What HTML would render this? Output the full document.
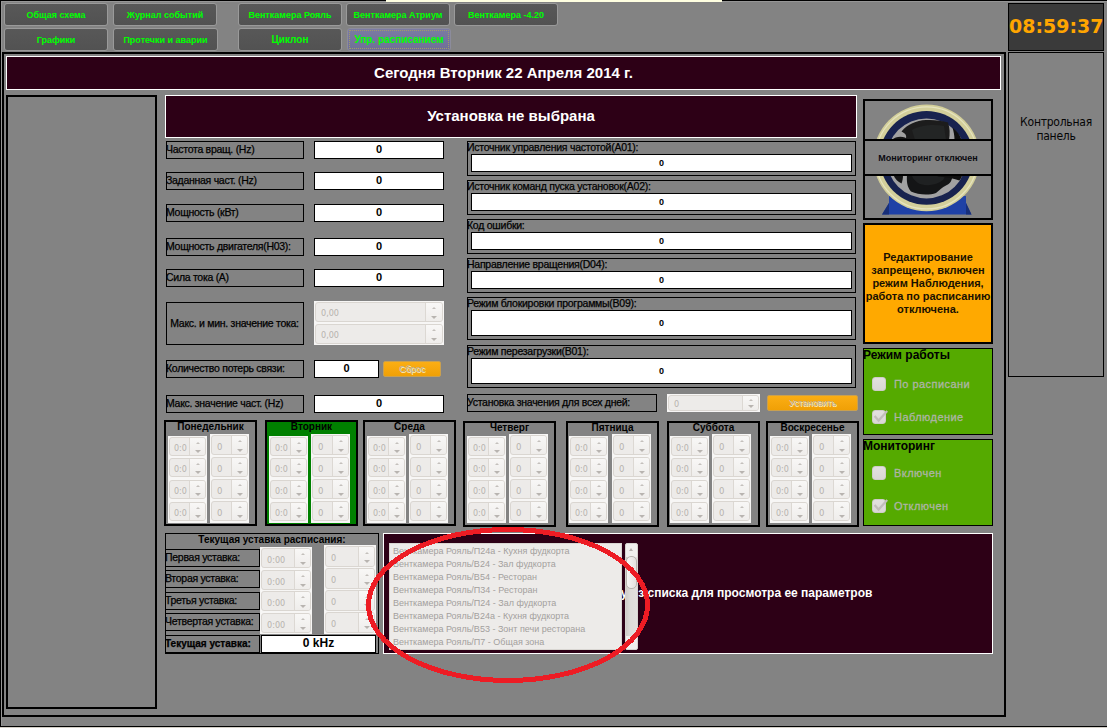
<!DOCTYPE html><html lang="ru"><head><meta charset="utf-8"><title>Управление расписанием</title><style>
*{box-sizing:border-box;margin:0;padding:0}
html,body{width:1107px;height:728px;overflow:hidden}
body{background:#838383;position:relative;font-family:"Liberation Sans",sans-serif;font-size:10.5px;color:#000}
.a{position:absolute}
.btn{position:absolute;height:23px;border:1px solid #9a9a9a;border-radius:3px;background:linear-gradient(#585858,#525252);color:#00ff00;font-weight:bold;font-size:9px;text-align:center;line-height:23px;white-space:nowrap}
.btn.big{font-size:10px;letter-spacing:0;line-height:21px}
.btn.sel{background:linear-gradient(#7b7ba3,#6f6f97);border-color:#8c8c9c}
.btn.sel i{position:absolute;left:1px;top:1px;right:1px;bottom:1px;border:1px dotted #a39c66;border-radius:1px}
.title{position:absolute;border:1px solid #fff;background:#2d0016;color:#fff;font-weight:bold;font-size:15px;text-align:center;white-space:nowrap}
.lbl{position:absolute;border:1px solid #000;white-space:nowrap;overflow:hidden;font-size:10.5px;letter-spacing:-0.28px;color:#000;text-indent:-1px;-webkit-text-stroke:0.25px #000}
.val{position:absolute;border:1px solid #000;background:#fff;text-align:center;font-weight:bold;font-size:11px;white-space:nowrap}
.grp{position:absolute;border:1px solid #000;font-size:10.5px;letter-spacing:-0.25px;white-space:nowrap;color:#000;-webkit-text-stroke:0.25px #000}
.grp span{position:absolute;left:-1px;top:-1px;line-height:13px}
.grp b{position:absolute;left:3px;right:3px;border:1px solid #000;background:#fff;text-align:center;font-size:9px;letter-spacing:0;color:#000;-webkit-text-stroke:0}
.sc{position:absolute;background:#f7f6f5}
.sp{position:absolute;border:1px solid #dad6d1;border-radius:3px;background:#edebe9;color:#b7b3ae;font-family:"DejaVu Sans Condensed","DejaVu Sans",sans-serif;font-stretch:condensed;font-size:9px;white-space:nowrap;overflow:hidden}
.sp.nc{font-family:"DejaVu Sans",sans-serif;font-stretch:normal}
.sp u{position:absolute;right:0;top:0;bottom:0;width:15px;background:linear-gradient(#f8f7f6,#efedeb);border-left:1px solid #dcd8d3;text-decoration:none}
.sp u:before{content:"";position:absolute;left:50%;margin-left:-2px;top:calc(29% - 1px);border:2px solid transparent;border-bottom:2px solid #c4c0bc;border-top:0}
.sp u:after{content:"";position:absolute;left:50%;margin-left:-3px;top:calc(77% - 1.3px);border:3px solid transparent;border-top:3.5px solid #b8b4b0;border-bottom:0}
.sp s{position:absolute;left:5px;top:0;text-decoration:none}
.day{position:absolute;border:2px solid #000;width:93px;height:106px}
.day.on{background:#008000}
.day em{position:absolute;left:0;right:0;top:-1px;text-align:center;font-style:normal;font-weight:bold;font-size:10px;line-height:12px;white-space:nowrap}
.cb{position:absolute;width:14px;height:14px;border-radius:3px;background:linear-gradient(#e2e0de,#dad8d5);border:1px solid #cfccc8}
.cbl{position:absolute;font-size:11px;letter-spacing:0.45px;color:#adb5a5;-webkit-text-stroke:0.3px #adb5a5;white-space:nowrap}
.li{position:absolute;left:3px;white-space:nowrap;font-size:9px;color:#a3a09d;line-height:13px}
</style></head><body>
<div class="a" style="left:0;top:0;width:1107px;height:1px;background:#000"></div>
<div class="a" style="left:0;top:0;width:1px;height:727px;background:#000"></div>
<div class="a" style="left:1px;top:1px;width:1106px;height:1px;background:#969696"></div>
<div class="a" style="left:1px;top:1px;width:1px;height:725px;background:#969696"></div>
<div class="a" style="left:0;top:726px;width:1107px;height:1px;background:#000"></div>
<div class="a" style="left:0;top:727px;width:1107px;height:1px;background:#d4d0c8"></div>
<div class="a" style="left:386px;top:0;width:336px;height:2px;background:#ffffe1"></div>
<div class="btn " style="left:4px;top:3px;width:104px">Общая схема</div>
<div class="btn " style="left:113px;top:3px;width:104px">Журнал событий</div>
<div class="btn " style="left:238px;top:3px;width:104px">Венткамера Рояль</div>
<div class="btn " style="left:346px;top:3px;width:104px">Венткамера Атриум</div>
<div class="btn " style="left:454px;top:3px;width:104px">Венткамера -4.20</div>
<div class="btn " style="left:4px;top:28px;width:104px">Графики</div>
<div class="btn " style="left:113px;top:28px;width:105px">Протечки и аварии</div>
<div class="btn big" style="left:238px;top:28px;width:104px">Циклон</div>
<div class="btn big sel" style="left:347px;top:28px;width:104px"><i></i>Упр. расписанием</div>
<div class="a" style="left:1008px;top:3px;width:96px;height:48px;border:1px solid #000;background:#3a3a3a;color:#ffa500;font:bold 19px/44px 'DejaVu Sans',sans-serif;text-align:center;white-space:nowrap">08:59:37</div>
<div class="a" style="left:1008px;top:52px;width:96px;height:325px;border:1px solid #000;font:12px/14px 'DejaVu Sans Condensed','DejaVu Sans',sans-serif;font-stretch:condensed;letter-spacing:-0.25px;text-align:center;padding-top:62px;color:#050505">Контрольная<br>панель</div>
<div class="a" style="left:2px;top:52px;width:1004px;height:665px;border:2px solid #000"></div>
<div class="title" style="left:6px;top:56px;width:995px;height:34px;line-height:32px">Сегодня Вторник 22 Апреля 2014 г.</div>
<div class="a" style="left:6px;top:95px;width:151px;height:614px;border:2px solid #000"></div>
<div class="title" style="left:165px;top:95px;width:692px;height:43px;line-height:39px">Установка не выбрана</div>
<div class="lbl" style="left:166px;top:141px;width:138px;height:18px;line-height:15px;">Частота вращ. (Hz)</div>
<div class="val" style="left:314px;top:141px;width:130px;height:18px;line-height:15px;">0</div>
<div class="lbl" style="left:166px;top:172px;width:138px;height:18px;line-height:15px;">Заданная част. (Hz)</div>
<div class="val" style="left:314px;top:172px;width:130px;height:18px;line-height:15px;">0</div>
<div class="lbl" style="left:166px;top:204px;width:138px;height:18px;line-height:15px;">Мощность (кВт)</div>
<div class="val" style="left:314px;top:204px;width:130px;height:18px;line-height:15px;">0</div>
<div class="lbl" style="left:166px;top:238px;width:138px;height:18px;line-height:15px;">Мощность двигателя(H03):</div>
<div class="val" style="left:314px;top:238px;width:130px;height:18px;line-height:15px;">0</div>
<div class="lbl" style="left:166px;top:269px;width:138px;height:18px;line-height:15px;">Сила тока (A)</div>
<div class="val" style="left:314px;top:269px;width:130px;height:18px;line-height:15px;">0</div>
<div class="lbl" style="left:166px;top:302px;width:138px;height:43px;line-height:40px;text-align:center;">Макс. и мин. значение тока:</div>
<div class="lbl" style="left:166px;top:360px;width:138px;height:18px;line-height:15px;">Количество потерь связи:</div>
<div class="val" style="left:314px;top:360px;width:65px;height:18px;line-height:15px;">0</div>
<div class="lbl" style="left:166px;top:395px;width:138px;height:18px;line-height:15px;">Макс. значение част. (Hz)</div>
<div class="val" style="left:314px;top:395px;width:130px;height:18px;line-height:15px;">0</div>
<div class="sc" style="left:314px;top:301px;width:130px;height:44px"></div>
<div class="sp" style="left:315px;top:302px;width:128px;height:20px;line-height:20px;font-size:9px"><s style="left:5px">0,00</s><u style="width:17px"></u></div>
<div class="sp" style="left:315px;top:324px;width:128px;height:20px;line-height:20px;font-size:9px"><s style="left:5px">0,00</s><u style="width:17px"></u></div>
<div class="a" style="left:383px;top:361px;width:58px;height:16px;border-radius:2px;border:1px solid #c9a050;background:linear-gradient(#fbae14,#f0a006);font-size:9px;line-height:14px;text-align:center;color:#b9b4a8;text-shadow:1px 1px 0 #fff0c8">Сброс</div>
<div class="grp" style="left:467px;top:141px;width:389px;height:35px"><span>Источник управления частотой(A01):</span><b style="top:12px;height:18px;line-height:16px">0</b></div>
<div class="grp" style="left:467px;top:180px;width:389px;height:35px"><span>Источник команд пуска установок(A02):</span><b style="top:12px;height:18px;line-height:16px">0</b></div>
<div class="grp" style="left:467px;top:219px;width:389px;height:35px"><span>Код ошибки:</span><b style="top:12px;height:18px;line-height:16px">0</b></div>
<div class="grp" style="left:467px;top:258px;width:389px;height:35px"><span>Направление вращения(D04):</span><b style="top:12px;height:18px;line-height:16px">0</b></div>
<div class="grp" style="left:467px;top:297px;width:389px;height:43px"><span>Режим блокировки программы(B09):</span><b style="top:12px;height:26px;line-height:24px">0</b></div>
<div class="grp" style="left:467px;top:345px;width:389px;height:43px"><span>Режим перезагрузки(B01):</span><b style="top:12px;height:26px;line-height:24px">0</b></div>
<div class="lbl" style="left:467px;top:394px;width:190px;height:18px;line-height:15px;">Установка значения для всех дней:</div>
<div class="sc" style="left:667px;top:394px;width:93px;height:18px"></div>
<div class="sp" style="left:668px;top:395px;width:91px;height:16px;line-height:16px;font-size:9px"><s style="left:5px">0</s><u style="width:16px"></u></div>
<div class="a" style="left:767px;top:395px;width:91px;height:16px;border-radius:2px;border:1px solid #c9a050;background:linear-gradient(#fbae14,#f0a006);font-size:9px;line-height:14px;text-align:center;color:#b9b4a8;text-shadow:1px 1px 0 #fff0c8">Установить</div>
<div class="day" style="left:164px;top:420px"><em>Понедельник</em></div>
<div class="sc" style="left:168px;top:436px;width:39px;height:87px"></div>
<div class="sc" style="left:210px;top:434px;width:39px;height:89px"></div>
<div class="sp nc" style="left:169px;top:437px;width:37px;height:19px;line-height:21px;font-size:8px"><s style="left:4px">0:0</s><u style="width:16px"></u></div>
<div class="sp nc" style="left:211px;top:435px;width:37px;height:20px;line-height:23px;font-size:8.5px"><s style="left:5px">0</s><u style="width:16px"></u></div>
<div class="sp nc" style="left:169px;top:458px;width:37px;height:19px;line-height:21px;font-size:8px"><s style="left:4px">0:0</s><u style="width:16px"></u></div>
<div class="sp nc" style="left:211px;top:457px;width:37px;height:20px;line-height:23px;font-size:8.5px"><s style="left:5px">0</s><u style="width:16px"></u></div>
<div class="sp nc" style="left:169px;top:480px;width:37px;height:19px;line-height:21px;font-size:8px"><s style="left:4px">0:0</s><u style="width:16px"></u></div>
<div class="sp nc" style="left:211px;top:479px;width:37px;height:20px;line-height:23px;font-size:8.5px"><s style="left:5px">0</s><u style="width:16px"></u></div>
<div class="sp nc" style="left:169px;top:502px;width:37px;height:19px;line-height:21px;font-size:8px"><s style="left:4px">0:0</s><u style="width:16px"></u></div>
<div class="sp nc" style="left:211px;top:501px;width:37px;height:20px;line-height:23px;font-size:8.5px"><s style="left:5px">0</s><u style="width:16px"></u></div>
<div class="day on" style="left:265px;top:420px"><em>Вторник</em></div>
<div class="sc" style="left:269px;top:436px;width:39px;height:87px"></div>
<div class="sc" style="left:311px;top:434px;width:39px;height:89px"></div>
<div class="sp nc" style="left:270px;top:437px;width:37px;height:19px;line-height:21px;font-size:8px"><s style="left:4px">0:0</s><u style="width:16px"></u></div>
<div class="sp nc" style="left:312px;top:435px;width:37px;height:20px;line-height:23px;font-size:8.5px"><s style="left:5px">0</s><u style="width:16px"></u></div>
<div class="sp nc" style="left:270px;top:458px;width:37px;height:19px;line-height:21px;font-size:8px"><s style="left:4px">0:0</s><u style="width:16px"></u></div>
<div class="sp nc" style="left:312px;top:457px;width:37px;height:20px;line-height:23px;font-size:8.5px"><s style="left:5px">0</s><u style="width:16px"></u></div>
<div class="sp nc" style="left:270px;top:480px;width:37px;height:19px;line-height:21px;font-size:8px"><s style="left:4px">0:0</s><u style="width:16px"></u></div>
<div class="sp nc" style="left:312px;top:479px;width:37px;height:20px;line-height:23px;font-size:8.5px"><s style="left:5px">0</s><u style="width:16px"></u></div>
<div class="sp nc" style="left:270px;top:502px;width:37px;height:19px;line-height:21px;font-size:8px"><s style="left:4px">0:0</s><u style="width:16px"></u></div>
<div class="sp nc" style="left:312px;top:501px;width:37px;height:20px;line-height:23px;font-size:8.5px"><s style="left:5px">0</s><u style="width:16px"></u></div>
<div class="day" style="left:363px;top:420px"><em>Среда</em></div>
<div class="sc" style="left:367px;top:436px;width:39px;height:87px"></div>
<div class="sc" style="left:409px;top:434px;width:39px;height:89px"></div>
<div class="sp nc" style="left:368px;top:437px;width:37px;height:19px;line-height:21px;font-size:8px"><s style="left:4px">0:0</s><u style="width:16px"></u></div>
<div class="sp nc" style="left:410px;top:435px;width:37px;height:20px;line-height:23px;font-size:8.5px"><s style="left:5px">0</s><u style="width:16px"></u></div>
<div class="sp nc" style="left:368px;top:458px;width:37px;height:19px;line-height:21px;font-size:8px"><s style="left:4px">0:0</s><u style="width:16px"></u></div>
<div class="sp nc" style="left:410px;top:457px;width:37px;height:20px;line-height:23px;font-size:8.5px"><s style="left:5px">0</s><u style="width:16px"></u></div>
<div class="sp nc" style="left:368px;top:480px;width:37px;height:19px;line-height:21px;font-size:8px"><s style="left:4px">0:0</s><u style="width:16px"></u></div>
<div class="sp nc" style="left:410px;top:479px;width:37px;height:20px;line-height:23px;font-size:8.5px"><s style="left:5px">0</s><u style="width:16px"></u></div>
<div class="sp nc" style="left:368px;top:502px;width:37px;height:19px;line-height:21px;font-size:8px"><s style="left:4px">0:0</s><u style="width:16px"></u></div>
<div class="sp nc" style="left:410px;top:501px;width:37px;height:20px;line-height:23px;font-size:8.5px"><s style="left:5px">0</s><u style="width:16px"></u></div>
<div class="day" style="left:463px;top:421px"><em>Четверг</em></div>
<div class="sc" style="left:467px;top:436px;width:39px;height:87px"></div>
<div class="sc" style="left:509px;top:434px;width:39px;height:89px"></div>
<div class="sp nc" style="left:468px;top:437px;width:37px;height:19px;line-height:21px;font-size:8px"><s style="left:4px">0:0</s><u style="width:16px"></u></div>
<div class="sp nc" style="left:510px;top:435px;width:37px;height:20px;line-height:23px;font-size:8.5px"><s style="left:5px">0</s><u style="width:16px"></u></div>
<div class="sp nc" style="left:468px;top:458px;width:37px;height:19px;line-height:21px;font-size:8px"><s style="left:4px">0:0</s><u style="width:16px"></u></div>
<div class="sp nc" style="left:510px;top:457px;width:37px;height:20px;line-height:23px;font-size:8.5px"><s style="left:5px">0</s><u style="width:16px"></u></div>
<div class="sp nc" style="left:468px;top:480px;width:37px;height:19px;line-height:21px;font-size:8px"><s style="left:4px">0:0</s><u style="width:16px"></u></div>
<div class="sp nc" style="left:510px;top:479px;width:37px;height:20px;line-height:23px;font-size:8.5px"><s style="left:5px">0</s><u style="width:16px"></u></div>
<div class="sp nc" style="left:468px;top:502px;width:37px;height:19px;line-height:21px;font-size:8px"><s style="left:4px">0:0</s><u style="width:16px"></u></div>
<div class="sp nc" style="left:510px;top:501px;width:37px;height:20px;line-height:23px;font-size:8.5px"><s style="left:5px">0</s><u style="width:16px"></u></div>
<div class="day" style="left:566px;top:421px"><em>Пятница</em></div>
<div class="sc" style="left:569px;top:436px;width:39px;height:87px"></div>
<div class="sc" style="left:612px;top:434px;width:39px;height:89px"></div>
<div class="sp nc" style="left:570px;top:437px;width:37px;height:19px;line-height:21px;font-size:8px"><s style="left:4px">0:0</s><u style="width:16px"></u></div>
<div class="sp nc" style="left:613px;top:435px;width:37px;height:20px;line-height:23px;font-size:8.5px"><s style="left:5px">0</s><u style="width:16px"></u></div>
<div class="sp nc" style="left:570px;top:458px;width:37px;height:19px;line-height:21px;font-size:8px"><s style="left:4px">0:0</s><u style="width:16px"></u></div>
<div class="sp nc" style="left:613px;top:457px;width:37px;height:20px;line-height:23px;font-size:8.5px"><s style="left:5px">0</s><u style="width:16px"></u></div>
<div class="sp nc" style="left:570px;top:480px;width:37px;height:19px;line-height:21px;font-size:8px"><s style="left:4px">0:0</s><u style="width:16px"></u></div>
<div class="sp nc" style="left:613px;top:479px;width:37px;height:20px;line-height:23px;font-size:8.5px"><s style="left:5px">0</s><u style="width:16px"></u></div>
<div class="sp nc" style="left:570px;top:502px;width:37px;height:19px;line-height:21px;font-size:8px"><s style="left:4px">0:0</s><u style="width:16px"></u></div>
<div class="sp nc" style="left:613px;top:501px;width:37px;height:20px;line-height:23px;font-size:8.5px"><s style="left:5px">0</s><u style="width:16px"></u></div>
<div class="day" style="left:667px;top:421px"><em>Суббота</em></div>
<div class="sc" style="left:670px;top:436px;width:39px;height:87px"></div>
<div class="sc" style="left:712px;top:434px;width:39px;height:89px"></div>
<div class="sp nc" style="left:671px;top:437px;width:37px;height:19px;line-height:21px;font-size:8px"><s style="left:4px">0:0</s><u style="width:16px"></u></div>
<div class="sp nc" style="left:713px;top:435px;width:37px;height:20px;line-height:23px;font-size:8.5px"><s style="left:5px">0</s><u style="width:16px"></u></div>
<div class="sp nc" style="left:671px;top:458px;width:37px;height:19px;line-height:21px;font-size:8px"><s style="left:4px">0:0</s><u style="width:16px"></u></div>
<div class="sp nc" style="left:713px;top:457px;width:37px;height:20px;line-height:23px;font-size:8.5px"><s style="left:5px">0</s><u style="width:16px"></u></div>
<div class="sp nc" style="left:671px;top:480px;width:37px;height:19px;line-height:21px;font-size:8px"><s style="left:4px">0:0</s><u style="width:16px"></u></div>
<div class="sp nc" style="left:713px;top:479px;width:37px;height:20px;line-height:23px;font-size:8.5px"><s style="left:5px">0</s><u style="width:16px"></u></div>
<div class="sp nc" style="left:671px;top:502px;width:37px;height:19px;line-height:21px;font-size:8px"><s style="left:4px">0:0</s><u style="width:16px"></u></div>
<div class="sp nc" style="left:713px;top:501px;width:37px;height:20px;line-height:23px;font-size:8.5px"><s style="left:5px">0</s><u style="width:16px"></u></div>
<div class="day" style="left:766px;top:421px"><em>Воскресенье</em></div>
<div class="sc" style="left:770px;top:436px;width:39px;height:87px"></div>
<div class="sc" style="left:812px;top:434px;width:39px;height:89px"></div>
<div class="sp nc" style="left:771px;top:437px;width:37px;height:19px;line-height:21px;font-size:8px"><s style="left:4px">0:0</s><u style="width:16px"></u></div>
<div class="sp nc" style="left:813px;top:435px;width:37px;height:20px;line-height:23px;font-size:8.5px"><s style="left:5px">0</s><u style="width:16px"></u></div>
<div class="sp nc" style="left:771px;top:458px;width:37px;height:19px;line-height:21px;font-size:8px"><s style="left:4px">0:0</s><u style="width:16px"></u></div>
<div class="sp nc" style="left:813px;top:457px;width:37px;height:20px;line-height:23px;font-size:8.5px"><s style="left:5px">0</s><u style="width:16px"></u></div>
<div class="sp nc" style="left:771px;top:480px;width:37px;height:19px;line-height:21px;font-size:8px"><s style="left:4px">0:0</s><u style="width:16px"></u></div>
<div class="sp nc" style="left:813px;top:479px;width:37px;height:20px;line-height:23px;font-size:8.5px"><s style="left:5px">0</s><u style="width:16px"></u></div>
<div class="sp nc" style="left:771px;top:502px;width:37px;height:19px;line-height:21px;font-size:8px"><s style="left:4px">0:0</s><u style="width:16px"></u></div>
<div class="sp nc" style="left:813px;top:501px;width:37px;height:20px;line-height:23px;font-size:8.5px"><s style="left:5px">0</s><u style="width:16px"></u></div>
<div class="a" style="left:165px;top:533px;width:214px;height:121px;border:1px solid #000"></div>
<div class="a" style="left:165px;top:534px;width:214px;text-align:center;font-weight:bold;font-size:10px;line-height:12px;white-space:nowrap">Текущая уставка расписания:</div>
<div class="lbl" style="left:165px;top:549px;width:95px;height:18px;line-height:15px;">Первая уставка:</div>
<div class="lbl" style="left:165px;top:570px;width:95px;height:18px;line-height:15px;">Вторая уставка:</div>
<div class="lbl" style="left:165px;top:592px;width:95px;height:18px;line-height:15px;">Третья уставка:</div>
<div class="lbl" style="left:165px;top:613px;width:95px;height:18px;line-height:15px;">Четвертая уставка:</div>
<div class="sc" style="left:260px;top:547px;width:52px;height:87px"></div>
<div class="sc" style="left:324px;top:545px;width:52px;height:89px"></div>
<div class="sp" style="left:261px;top:548px;width:50px;height:20px;line-height:22px;font-size:9px"><s style="left:5px">0:00</s><u style="width:16px"></u></div>
<div class="sp" style="left:325px;top:546px;width:50px;height:21px;line-height:23px;font-size:9px"><s style="left:5px">0</s><u style="width:16px"></u></div>
<div class="sp" style="left:261px;top:570px;width:50px;height:20px;line-height:22px;font-size:9px"><s style="left:5px">0:00</s><u style="width:16px"></u></div>
<div class="sp" style="left:325px;top:568px;width:50px;height:21px;line-height:23px;font-size:9px"><s style="left:5px">0</s><u style="width:16px"></u></div>
<div class="sp" style="left:261px;top:591px;width:50px;height:20px;line-height:22px;font-size:9px"><s style="left:5px">0:00</s><u style="width:16px"></u></div>
<div class="sp" style="left:325px;top:590px;width:50px;height:21px;line-height:23px;font-size:9px"><s style="left:5px">0</s><u style="width:16px"></u></div>
<div class="sp" style="left:261px;top:613px;width:50px;height:20px;line-height:22px;font-size:9px"><s style="left:5px">0:00</s><u style="width:16px"></u></div>
<div class="sp" style="left:325px;top:612px;width:50px;height:21px;line-height:23px;font-size:9px"><s style="left:5px">0</s><u style="width:16px"></u></div>
<div class="lbl" style="left:165px;top:635px;width:95px;height:18px;line-height:15px;font-weight:bold;font-size:10px;letter-spacing:0;">Текущая уставка:</div>
<div class="val" style="left:261px;top:635px;width:115px;height:18px;line-height:15px;font-size:12px;">0 kHz</div>
<div class="title" style="left:383px;top:533px;width:610px;height:121px;line-height:118px;font-size:12px">Выберите установку из списка для просмотра ее параметров</div>
<div class="a" style="left:389px;top:543px;width:233px;height:107px;background:#edebe9;border:1px solid #d9d6d2;overflow:hidden">
<div class="li" style="top:1px">Венткамера Рояль/П24а - Кухня фудкорта</div>
<div class="li" style="top:14px">Венткамера Рояль/В24 - Зал фудкорта</div>
<div class="li" style="top:27px">Венткамера Рояль/В54 - Ресторан</div>
<div class="li" style="top:40px">Венткамера Рояль/П34 - Ресторан</div>
<div class="li" style="top:53px">Венткамера Рояль/П24 - Зал фудкорта</div>
<div class="li" style="top:66px">Венткамера Рояль/В24а - Кухня фудкорта</div>
<div class="li" style="top:79px">Венткамера Рояль/В53 - Зонт печи ресторана</div>
<div class="li" style="top:92px">Венткамера Рояль/П7 - Общая зона</div>
</div>
<div class="a" style="left:625px;top:543px;width:13px;height:107px;background:#f1f0ee;border:1px solid #d6d3cf;border-radius:2px"></div>
<div class="a" style="left:626px;top:557px;width:11px;height:79px;background:linear-gradient(90deg,#cfccc8,#dedcd9 40%,#e2e0dd)"></div>
<div class="a" style="left:626px;top:556px;width:11px;height:33px;background:linear-gradient(90deg,#f7f6f5,#e3e1de);border:1px solid #b9b5b0;border-radius:5px"></div>
<div class="a" style="left:629px;top:548px;border:2.5px solid transparent;border-bottom:3px solid #b5b1ad;border-top:0"></div>
<svg class="a" style="left:360px;top:520px" width="300" height="170" viewBox="0 0 300 170"><ellipse cx="148" cy="85" rx="139.5" ry="75.5" fill="none" stroke="#ed1c24" stroke-width="5" shape-rendering="crispEdges"/></svg>
<div class="a" style="left:863px;top:99px;width:130px;height:121px;border:2px solid #000;overflow:hidden"></div>
<svg class="a" style="left:865px;top:101px" width="126" height="117" viewBox="865 101 126 117">
<polygon points="889,196 966,196 966,203 971.5,214.5 882,214.5 889,203" fill="#1f41a6"/>
<polygon points="889,203 889,214.5 882,214.5" fill="#182f78"/>
<polygon points="966,203 966,214.5 971.5,214.5" fill="#182f78"/>
<circle cx="926.6" cy="157.9" r="53.3" fill="#d3cf9a"/>
<circle cx="926.6" cy="157.9" r="51" fill="none" stroke="#e6e4c0" stroke-width="1.2"/>
<circle cx="926.5" cy="157.8" r="46.9" fill="#18234f"/>
<circle cx="926.5" cy="158.4" r="40" fill="#a2a2a2"/>
<path d="M901.5,131.5 C908,124 916,120.5 926,120 C934,119.6 942,120.5 948,122.5 C950,128 950,134 949,140 L905,140 C908,136 905,133 901.5,131.5 Z" fill="#1c1c1c"/>
<path d="M912,130 C920,125 934,124 944,126 L946,140 L915,140 Z" fill="#232525"/>
<path d="M952.5,127.5 C957,131 960,135 961.5,140 L954.5,140 C954.5,135 953.5,131 952.5,127.5 Z" fill="#101010"/>
<path d="M892,140 C895,137 900,136 905,137.5 L908,140 Z" fill="#161616"/>
<path d="M907,175 L952.5,175 C952,181 950,184 946,185.5 C942,187 940,190 936,193 C929,195.5 918,195 911,191.5 C907,187 906.5,181 907,175 Z" fill="#141516"/>
<path d="M912,176 L945,176 C944,181 938,184 930,185 C922,186 915,183 912,176 Z" fill="#1f2122"/>
<path d="M893.4,175 L903,175 C903,178 902.5,181 901.5,183.5 C898,182 895,179 893.4,175 Z" fill="#151515"/>
<path d="M937.7,175 L962.3,175 C961.5,177.5 960.5,179 959.5,180.5 C953,178 945,177 937.7,176.5 Z" fill="#101010"/>
</svg>
<div class="a" style="left:863px;top:139px;width:130px;height:37px;border:2px solid #000;background:#838383;font-weight:bold;font-size:9px;line-height:35px;text-align:center;white-space:nowrap;color:#0a0a10">Мониторинг отключен</div>
<div class="a" style="left:863px;top:223px;width:130px;height:121px;border:2px solid #000;background:#ffa900;font-weight:bold;font-size:11px;line-height:13px;text-align:center;padding-top:26px;color:#1a1100">Редактирование<br>запрещено, включен<br>режим Наблюдения,<br>работа по расписанию<br>отключена.</div>
<div class="a" style="left:863px;top:348px;width:130px;height:87px;border:1px solid #000;background:#55aa00"></div>
<div class="a" style="left:863px;top:348px;font-weight:bold;font-size:12px;line-height:14px;white-space:nowrap">Режим работы</div>
<div class="cb" style="left:872px;top:377px"></div>
<div class="cbl" style="left:894px;top:377px;line-height:14px">По расписани</div>
<div class="cb" style="left:872px;top:410px"></div>
<svg class="a" style="left:872px;top:408px" width="16" height="16" viewBox="0 0 16 16"><path d="M2.6 8.1 L6.6 12.6 L15.2 3.1" fill="none" stroke="#c1beba" stroke-width="2.2"/></svg>
<div class="cbl" style="left:894px;top:410px;line-height:14px">Наблюдение</div>
<div class="a" style="left:863px;top:439px;width:130px;height:87px;border:1px solid #000;background:#55aa00"></div>
<div class="a" style="left:863px;top:439px;font-weight:bold;font-size:12px;line-height:14px;white-space:nowrap">Мониторинг</div>
<div class="cb" style="left:872px;top:466px"></div>
<div class="cbl" style="left:894px;top:466px;line-height:14px">Включен</div>
<div class="cb" style="left:872px;top:499px"></div>
<svg class="a" style="left:872px;top:497px" width="16" height="16" viewBox="0 0 16 16"><path d="M2.6 8.1 L6.6 12.6 L15.2 3.1" fill="none" stroke="#c1beba" stroke-width="2.2"/></svg>
<div class="cbl" style="left:894px;top:499px;line-height:14px">Отключен</div>
</body></html>
